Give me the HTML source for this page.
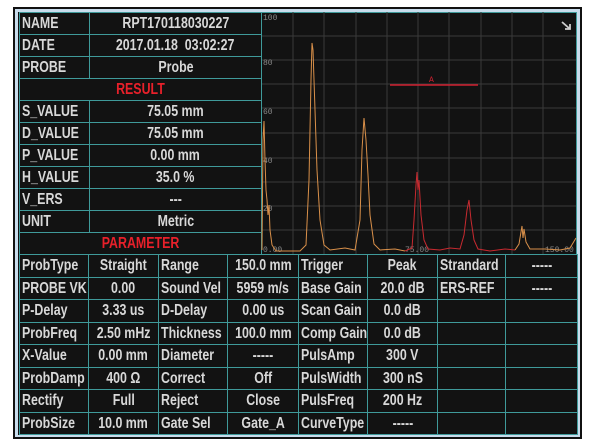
<!DOCTYPE html>
<html><head><style>
*{margin:0;padding:0;box-sizing:border-box}
body{width:600px;height:444px;background:#fff;position:relative;overflow:hidden;font-family:"Liberation Sans",Arial,sans-serif;font-weight:bold;color:#d8d8d8}
#frame{position:absolute;left:13px;top:7px;width:569px;height:432px;border:2px solid #111;background:#c9dcec;}
#inner{position:absolute;left:18px;top:12px;width:559px;height:423px;background:#121212;}
.c{position:absolute;border:1px solid #3f9a9a;font-size:15.5px;line-height:21px;white-space:nowrap;overflow:hidden}
.c span{display:inline-block;transform:scaleX(0.8)}
.l{padding-left:2px}
.l span{transform-origin:0 50%}
.v,.r{text-align:center}
.r{color:#e8202a}
svg{position:absolute;left:0;top:0}
</style></head><body>
<div id="frame"></div>
<div id="inner"></div>
<div id="cells"></div>
<svg width="600" height="444">
<g stroke="#3a3a3a" stroke-width="1">
<line x1="293" y1="12" x2="293" y2="254"/><line x1="324" y1="12" x2="324" y2="254"/><line x1="356" y1="12" x2="356" y2="254"/><line x1="387" y1="12" x2="387" y2="254"/><line x1="418" y1="12" x2="418" y2="254"/><line x1="449" y1="12" x2="449" y2="254"/><line x1="481" y1="12" x2="481" y2="254"/><line x1="512" y1="12" x2="512" y2="254"/><line x1="543" y1="12" x2="543" y2="254"/>
<line x1="262" y1="36" x2="576" y2="36"/><line x1="262" y1="60" x2="576" y2="60"/><line x1="262" y1="84" x2="576" y2="84"/><line x1="262" y1="108" x2="576" y2="108"/><line x1="262" y1="133" x2="576" y2="133"/><line x1="262" y1="158" x2="576" y2="158"/><line x1="262" y1="182" x2="576" y2="182"/><line x1="262" y1="206" x2="576" y2="206"/><line x1="262" y1="230" x2="576" y2="230"/>
</g>
<g font-family="Liberation Mono,monospace" font-size="8" fill="#888" font-weight="normal">
<text x="263" y="20">100</text><text x="263" y="65">80</text><text x="263" y="114">60</text><text x="263" y="163">40</text><text x="263" y="211">20</text><text x="263" y="252">0.00</text><text x="405" y="252">75.00</text><text x="545" y="252">150.00</text>
</g>
<line x1="390" y1="85" x2="478" y2="85" stroke="#d02030" stroke-width="1.5"/>
<text x="429" y="82" font-size="8" fill="#d02030" font-family="Liberation Mono,monospace" font-weight="normal">A</text>
<polyline fill="none" stroke="#d9904a" stroke-width="1" points="262,250 263,140 264,121 265,160 266,190 267,200 268,215 269,205 270,230 272,245 276,251 300,251 306,245 309,180 311,80 312,43 313,50 315,110 317,170 320,220 324,245 330,250 345,248 355,250 360,220 362,150 364,118 366,140 368,175 370,215 374,244 380,250 395,249 405,251"/>
<polyline fill="none" stroke="#c82a30" stroke-width="1" points="405,251 412,248 414,220 416,185 417,172 418,190 419,180 421,215 424,240 428,249 440,250 450,248 460,249 464,235 467,210 469,200 471,220 474,240 478,249 490,251 505,249 515,250"/>
<polyline fill="none" stroke="#d9904a" stroke-width="1" points="515,250 519,244 521,232 522,226 523,238 524,229 526,242 530,249 545,249 560,250 570,248 576,238"/>
<path d="M562 22 L570 29 M570 24 L570 29 L565 29" stroke="#ccc" stroke-width="1.8" fill="none"/>
</svg>
<script>
var h='';
function c(x,y,w,hh,t,cls){h+='<div class="c '+cls+'" style="left:'+x+'px;top:'+y+'px;width:'+(w+1)+'px;height:'+(hh+1)+'px"><span>'+t+'</span></div>';}
var L=[['NAME','RPT170118030227'],['DATE','2017.01.18&nbsp; 03:02:27'],['PROBE','Probe'],[null,'RESULT'],['S_VALUE','75.05 mm'],['D_VALUE','75.05 mm'],['P_VALUE','0.00 mm'],['H_VALUE','35.0 %'],['V_ERS','---'],['UNIT','Metric'],[null,'PARAMETER']];
for(var i=0;i<L.length;i++){var y=12+i*22;if(L[i][0]===null)c(19,y,242,22,L[i][1],'r');else{c(19,y,70,22,L[i][0],'l');c(89,y,172,22,L[i][1],'v');}}
c(261,12,315,242,'','');
var X=[19,88,158,227,298,367,437,505,577];
var R=[['ProbType','Straight','Range','150.0 mm','Trigger','Peak','Strandard','-----'],['PROBE VK','0.00','Sound Vel','5959 m/s','Base Gain','20.0 dB','ERS-REF','-----'],['P-Delay','3.33 us','D-Delay','0.00 us','Scan Gain','0.0 dB','',''],['ProbFreq','2.50 mHz','Thickness','100.0 mm','Comp Gain','0.0 dB','',''],['X-Value','0.00 mm','Diameter','-----','PulsAmp','300 V','',''],['ProbDamp','400 &Omega;','Correct','Off','PulsWidth','300 nS','',''],['Rectify','Full','Reject','Close','PulsFreq','200 Hz','',''],['ProbSize','10.0 mm','Gate Sel','Gate_A','CurveType','-----','','']];
for(var r=0;r<8;r++){var y=Math.round(254+r*22.5),y2=Math.round(254+(r+1)*22.5);for(var k=0;k<8;k++)c(X[k],y,X[k+1]-X[k],y2-y,R[r][k],k%2?'v':'l');}
document.getElementById('cells').innerHTML=h;
</script>
</body></html>
